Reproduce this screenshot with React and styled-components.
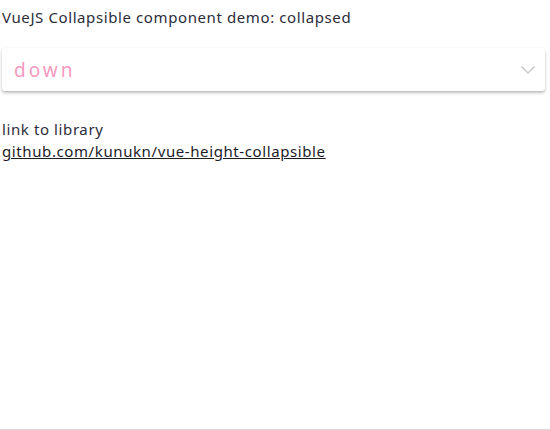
import styled, { createGlobalStyle } from "styled-components";

const GlobalStyle = createGlobalStyle`
  html, body {
    margin: 0;
    padding: 0;
    background: #ffffff;
  }
  body {
    font-family: "Noto Sans", "Liberation Sans", sans-serif;
    color: #2c2c3a;
  }
`;

const Page = styled.div`
  box-sizing: border-box;
  height: 100vh;
  padding: 7px 5px 0 2px;
  border-bottom: 1px solid #d9d9d9;
  display: flex;
  flex-direction: column;
`;

const Title = styled.div`
  font-size: 15px;
  line-height: 20px;
  letter-spacing: 0.6px;
`;

const Collapsible = styled.div`
  margin-top: 21px;
  background: #ffffff;
  border-radius: 3px;
  box-shadow: 0 2px 3px rgba(0, 0, 0, 0.25), 0 0 2px rgba(0, 0, 0, 0.06);
`;

const Header = styled.div`
  height: 43px;
  padding: 0 9px 0 12px;
  display: flex;
  align-items: center;
  justify-content: space-between;
  cursor: pointer;
`;

const Label = styled.span`
  font-size: 19px;
  letter-spacing: 3px;
  color: #f79ac0;
`;

const Chevron = styled.svg`
  width: 16px;
  height: 10px;
`;

const Links = styled.div`
  margin-top: 27px;
  font-size: 15px;
  line-height: 22px;
  letter-spacing: 0.6px;
`;

const LibraryLink = styled.a`
  color: #1c1c28;
  text-decoration: underline;
`;

export default function App() {
  return (
    <>
      <GlobalStyle />
      <Page>
        <Title>VueJS Collapsible component demo: collapsed</Title>
        <Collapsible>
          <Header>
            <Label>down</Label>
            <Chevron viewBox="0 0 16 10">
              <path d="M1.5 1.5 L8 8 L14.5 1.5" fill="none" stroke="#c8c8c8" strokeWidth="1.5" />
            </Chevron>
          </Header>
        </Collapsible>
        <Links>
          <div>link to library</div>
          <LibraryLink href="#">github.com/kunukn/vue-height-collapsible</LibraryLink>
        </Links>
      </Page>
    </>
  );
}
